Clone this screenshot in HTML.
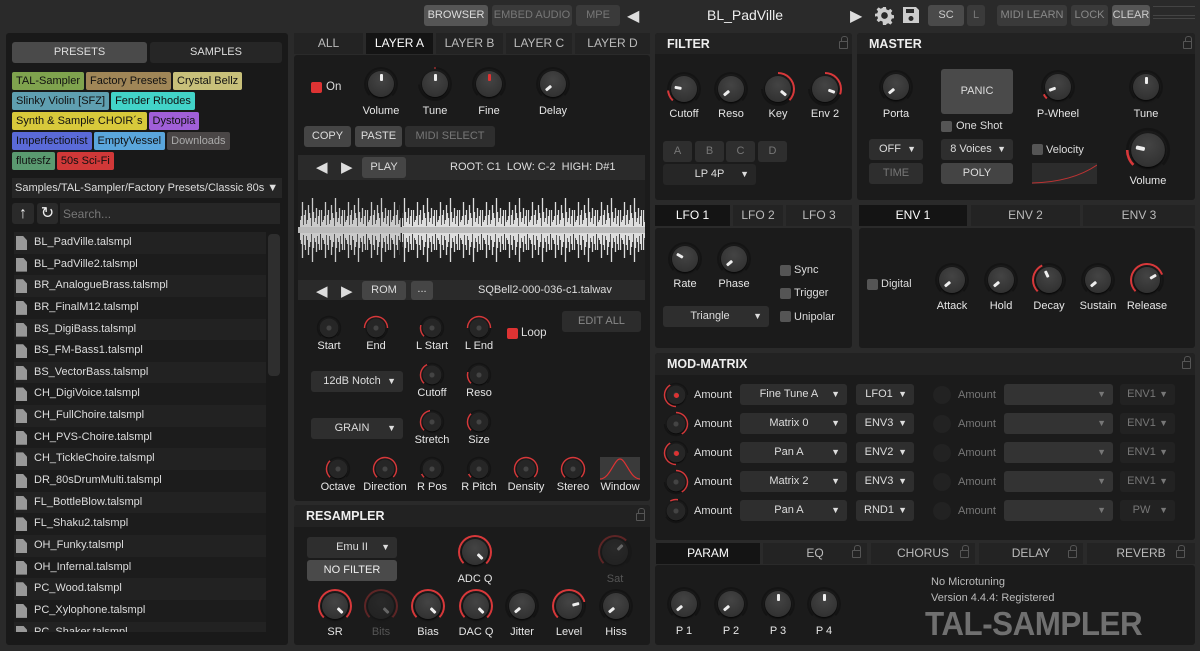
<!DOCTYPE html>
<html><head><meta charset="utf-8"><style>
*{box-sizing:border-box;margin:0;padding:0}
body{width:1200px;height:651px;overflow:hidden;background:#2a2a2a;font-family:"Liberation Sans",sans-serif;font-size:11px;color:#ddd;position:relative}
.a{position:absolute}
.p{position:absolute;background:#1b1b1b;border-radius:3px}
.h{position:absolute;background:#222;font-size:12.5px;font-weight:bold;color:#eee;padding:4px 0 0 12px;border-radius:3px 3px 0 0}
.b{position:absolute;background:#3a3a3a;border-radius:3px;text-align:center;font-size:11px;color:#ccc;line-height:21px}
.t{position:absolute;text-align:center;font-size:12px;color:#bbb;background:#232323;line-height:20px}
.l{position:absolute;font-size:11px;color:#e6e6e6;transform:translateX(-50%);white-space:nowrap}
.k{position:absolute;left:calc(var(--x) - 17px);top:calc(var(--y) - 17px);width:34px;height:34px;border-radius:50%;background:conic-gradient(from var(--s,225deg),#d8383a 0 var(--a,0deg),#141414 var(--a,0deg) 270deg,transparent 270deg)}
.k:before{content:"";position:absolute;inset:2px;border-radius:50%;background:#1b1b1b}
.k:after{content:"";position:absolute;inset:4px;border-radius:50%;background:radial-gradient(circle at 50% 35%,#444,#2c2c2c);box-shadow:0 1px 2px #000}
.k i{position:absolute;z-index:2;left:15.5px;top:7px;width:3px;height:7px;background:#eee;border-radius:1px;transform-origin:1.5px 10px;transform:rotate(var(--r,0deg))}
.kb{transform:scale(1.3)}
.ks{transform:scale(.72)}
.ks:after{background:radial-gradient(circle,#444 0 3px,#262626 4px)}
.dim{opacity:.35}
.dd{position:absolute;background:#2e2e2e;border-radius:3px;text-align:center;line-height:21px;font-size:11px;color:#ddd}
.dd:after{content:"▼";position:absolute;right:7px;font-size:9px}
.tag{display:inline-block;padding:0 4px;line-height:18px;margin:0 2px 2px 0;border-radius:2px;color:#111;font-size:11px}
.row{height:21.65px;line-height:21.65px;padding-left:20px;position:relative;font-size:11px;color:#ddd}
.row:before{content:"";position:absolute;left:2px;top:4px;width:11px;height:14px;background:#999;clip-path:polygon(0 0,65% 0,100% 30%,100% 100%,0 100%)}
.row:nth-child(odd){background:#222}.row:nth-child(even){background:#1c1c1c}
.ck{position:absolute;width:11px;height:11px;background:#555;border-radius:2px}
.lk{position:absolute;width:9px;height:8px;border:1.5px solid #555;border-radius:1px}
.lk:before{content:"";position:absolute;left:0.5px;top:-6px;width:5px;height:5px;border:1.5px solid #555;border-bottom:none;border-radius:3px 3px 0 0}
</style></head><body>
<!-- top bar -->
<div class="b" style="left:424px;top:5px;width:64px;height:21px;background:#555;color:#ddd">BROWSER</div>
<div class="b" style="left:492px;top:5px;width:80px;height:21px;color:#777">EMBED AUDIO</div>
<div class="b" style="left:576px;top:5px;width:44px;height:21px;color:#777">MPE</div>
<div class="a" style="left:627px;top:6px;font-size:16px;color:#ddd">◀</div>
<div class="a" style="left:690px;top:7px;width:110px;text-align:center;font-size:14px;color:#eee">BL_PadVille</div>
<div class="a" style="left:850px;top:6px;font-size:16px;color:#ddd">▶</div>
<svg class="a" style="left:875px;top:6px" width="19" height="19" viewBox="0 0 20 20"><path fill="#ccc" d="M8.5 1h3l.5 2.6 2 .9 2.2-1.5 2.1 2.1-1.5 2.2.9 2 2.6.5v3l-2.6.5-.9 2 1.5 2.2-2.1 2.1-2.2-1.5-2 .9-.5 2.6h-3L8 16.4l-2-.9-2.2 1.5-2.1-2.1 1.5-2.2-.9-2L-.3 11.2v-3L2.3 7.7l.9-2L1.7 3.5l2.1-2.1L6 2.9l2-.9zM10 6.5a3.5 3.5 0 100 7 3.5 3.5 0 000-7z"/></svg>
<svg class="a" style="left:902px;top:6px" width="18" height="18" viewBox="0 0 18 18"><path fill="#ccc" d="M1 1h13l3 3v13H1zM4 3v4h8V3zM9 10a2.5 2.5 0 100 5 2.5 2.5 0 000-5z"/></svg>
<div class="b" style="left:928px;top:5px;width:36px;height:21px;background:#4a4a4a">SC</div>
<div class="b" style="left:967px;top:5px;width:18px;height:21px;color:#777">L</div>
<div class="b" style="left:997px;top:5px;width:70px;height:21px;color:#888">MIDI LEARN</div>
<div class="b" style="left:1071px;top:5px;width:37px;height:21px;color:#888">LOCK</div>
<div class="b" style="left:1112px;top:5px;width:38px;height:21px;background:#555">CLEAR</div>
<div class="a" style="left:1153px;top:6px;width:42px;height:10px;border-top:1px solid #444;border-bottom:1px solid #444"></div>
<div class="a" style="left:1153px;top:18px;width:42px;height:1px;background:#444"></div>

<!-- browser -->
<div class="p" style="left:6px;top:33px;width:282px;height:612px;background:#191919"></div>
<div class="b" style="left:12px;top:42px;width:135px;height:21px;background:#4a4a4a;color:#ddd">PRESETS</div>
<div class="b" style="left:150px;top:42px;width:132px;height:21px;background:#262626;color:#ddd">SAMPLES</div>
<div class="a" style="left:12px;top:72px;width:272px;line-height:0">
<span class="tag" style="background:#7fa34e">TAL-Sampler</span><span class="tag" style="background:#a08657">Factory Presets</span><span class="tag" style="background:#c8c07a">Crystal Bellz</span><br>
<span class="tag" style="background:#5f9fb0">Slinky Violin [SFZ]</span><span class="tag" style="background:#42d3c8">Fender Rhodes</span><br>
<span class="tag" style="background:#d8c93b">Synth &amp; Sample CHOIR´s</span><span class="tag" style="background:#a05fd8">Dystopia</span><br>
<span class="tag" style="background:#5a6ad8">Imperfectionist</span><span class="tag" style="background:#5aa6dc">EmptyVessel</span><span class="tag" style="background:#4a4646;color:#aaa">Downloads</span><br>
<span class="tag" style="background:#5a9a70">flutesfz</span><span class="tag" style="background:#d03838">50s Sci-Fi</span></div>
<div class="a" style="left:12px;top:178px;width:270px;height:20px;background:#262626;line-height:20px;padding-left:3px;font-size:11px;white-space:nowrap;overflow:hidden">Samples/TAL-Sampler/Factory Presets/Classic 80s ▼</div>
<div class="b" style="left:12px;top:203px;width:22px;height:21px;background:#2a2a2a;font-size:16px;color:#eee;line-height:21px">↑</div>
<div class="b" style="left:37px;top:203px;width:21px;height:21px;background:#2a2a2a;font-size:16px;color:#eee;line-height:21px">↻</div>
<div class="a" style="left:60px;top:203px;width:220px;height:21px;background:#262626;color:#777;padding:4px 3px;font-size:12px">Search...</div>
<div class="a" style="left:14px;top:232px;width:252px;height:400px;overflow:hidden">
<div class="row">BL_PadVille.talsmpl</div><div class="row">BL_PadVille2.talsmpl</div><div class="row">BR_AnalogueBrass.talsmpl</div><div class="row">BR_FinalM12.talsmpl</div><div class="row">BS_DigiBass.talsmpl</div><div class="row">BS_FM-Bass1.talsmpl</div><div class="row">BS_VectorBass.talsmpl</div><div class="row">CH_DigiVoice.talsmpl</div><div class="row">CH_FullChoire.talsmpl</div><div class="row">CH_PVS-Choire.talsmpl</div><div class="row">CH_TickleChoire.talsmpl</div><div class="row">DR_80sDrumMulti.talsmpl</div><div class="row">FL_BottleBlow.talsmpl</div><div class="row">FL_Shaku2.talsmpl</div><div class="row">OH_Funky.talsmpl</div><div class="row">OH_Infernal.talsmpl</div><div class="row">PC_Wood.talsmpl</div><div class="row">PC_Xylophone.talsmpl</div><div class="row">PC_Shaker.talsmpl</div></div>
<div class="a" style="left:268px;top:234px;width:12px;height:142px;background:#2e2e2e;border-radius:4px"></div>

<!-- layer -->
<div class="t" style="left:294px;top:33px;width:69px;height:21px">ALL</div>
<div class="t" style="left:366px;top:33px;width:67px;height:21px;background:#141414;color:#fff">LAYER A</div>
<div class="t" style="left:436px;top:33px;width:67px;height:21px">LAYER B</div>
<div class="t" style="left:506px;top:33px;width:66px;height:21px">LAYER C</div>
<div class="t" style="left:575px;top:33px;width:75px;height:21px">LAYER D</div>
<div class="p" style="left:294px;top:55px;width:356px;height:446px"></div>
<div class="a" style="left:311px;top:82px;width:11px;height:11px;background:#d33;border-radius:2px"></div>
<div class="a" style="left:326px;top:81px;font-size:11.5px">On</div>
<div class="k" style="--x:381px;--y:84px"><i></i></div>
<div class="k" style="--x:435px;--y:84px;--s:358deg;--a:4deg"><i></i></div>
<div class="k" style="--x:489px;--y:84px"><i style="background:#d33"></i></div>
<div class="k" style="--x:553px;--y:84px;--r:-130deg"><i></i></div>
<div class="l" style="left:381px;top:105px">Volume</div><div class="l" style="left:435px;top:105px">Tune</div><div class="l" style="left:489px;top:105px">Fine</div><div class="l" style="left:553px;top:105px">Delay</div>
<div class="b" style="left:304px;top:126px;width:47px;height:21px;background:#454545;color:#ddd">COPY</div>
<div class="b" style="left:355px;top:126px;width:47px;height:21px;background:#454545;color:#ddd">PASTE</div>
<div class="b" style="left:405px;top:126px;width:90px;height:21px;background:#2e2e2e;color:#777">MIDI SELECT</div>
<div class="a" style="left:298px;top:155px;width:347px;height:25px;background:#2a2a2a"></div>
<div class="a" style="left:316px;top:158px;font-size:15px">◀</div><div class="a" style="left:341px;top:158px;font-size:15px">▶</div>
<div class="b" style="left:362px;top:157px;width:44px;height:21px;background:#454545;color:#ddd">PLAY</div>
<div class="a" style="left:450px;top:161px;font-size:11px">ROOT: C1&nbsp;&nbsp;LOW: C-2&nbsp;&nbsp;HIGH: D#1</div>
<svg class="a" style="left:298px;top:180px" width="347" height="100">
<defs><pattern id="w" width="23" height="100" patternUnits="userSpaceOnUse"><path stroke-width="1.3" d="M0.5 30V70M2.5 40V60M4.5 22V78M6.5 35V65M8.5 44V56M10.5 25V75M12.5 38V62M14.5 18V82M16.5 42V58M18.5 28V72M20.5 36V64M22.5 46V54M1.5 42V58M3.5 36V64M5.5 45V55M7.5 30V70M9.5 40V60M11.5 33V67M13.5 46V54M15.5 32V68M17.5 38V62M19.5 44V56M21.5 30V70" stroke="currentColor"/></pattern></defs>
<rect x="0" y="0" width="347" height="100" fill="#1f1f1f"/>
<g style="color:#8a8a8a"><rect x="2" y="14" width="100" height="72" fill="url(#w)" opacity=".9"/></g>
<rect x="102" y="38" width="1" height="24" fill="#888"/>
<g style="color:#dcdcdc"><rect x="104" y="6" width="243" height="88" fill="url(#w)"/></g>
<rect x="0" y="47" width="347" height="6" fill="#bbb"/>
</svg>
<div class="a" style="left:298px;top:280px;width:347px;height:20px;background:#2a2a2a"></div>
<div class="a" style="left:316px;top:282px;font-size:15px">◀</div><div class="a" style="left:341px;top:282px;font-size:15px">▶</div>
<div class="b" style="left:362px;top:281px;width:44px;height:19px;line-height:19px;background:#454545;color:#ddd">ROM</div>
<div class="b" style="left:411px;top:281px;width:22px;height:19px;line-height:16px;background:#454545;color:#ddd">...</div>
<div class="a" style="left:478px;top:284px;font-size:11px">SQBell2-000-036-c1.talwav</div>
<div class="b" style="left:562px;top:311px;width:79px;height:21px;background:#2c2c2c;color:#888">EDIT ALL</div>
<div class="a" style="left:507px;top:328px;width:11px;height:11px;background:#d33;border-radius:2px"></div>
<div class="a" style="left:521px;top:327px;font-size:11.5px">Loop</div>
<div class="k ks" style="--x:329px;--y:328px"></div>
<div class="k ks" style="--x:376px;--y:328px;--s:270deg;--a:180deg"></div>
<div class="k ks" style="--x:432px;--y:328px;--s:225deg;--a:60deg"></div>
<div class="k ks" style="--x:479px;--y:328px;--s:270deg;--a:180deg"></div>
<div class="l" style="left:329px;top:340px">Start</div><div class="l" style="left:376px;top:340px">End</div><div class="l" style="left:432px;top:340px">L Start</div><div class="l" style="left:479px;top:340px">L End</div>
<div class="dd" style="left:311px;top:371px;width:92px;height:21px;padding-right:10px">12dB Notch</div>
<div class="dd" style="left:311px;top:418px;width:92px;height:21px;padding-right:10px">GRAIN</div>
<div class="k ks" style="--x:432px;--y:375px;--a:110deg"></div>
<div class="k ks" style="--x:479px;--y:375px;--a:60deg"></div>
<div class="k ks" style="--x:432px;--y:422px;--a:125deg"></div>
<div class="k ks" style="--x:479px;--y:422px;--a:90deg"></div>
<div class="l" style="left:432px;top:387px">Cutoff</div><div class="l" style="left:479px;top:387px">Reso</div>
<div class="l" style="left:432px;top:434px">Stretch</div><div class="l" style="left:479px;top:434px">Size</div>
<div class="k ks" style="--x:338px;--y:469px;--a:90deg"></div>
<div class="k ks" style="--x:385px;--y:469px;--a:270deg"></div>
<div class="k ks" style="--x:432px;--y:469px;--a:20deg"></div>
<div class="k ks" style="--x:479px;--y:469px;--a:20deg"></div>
<div class="k ks" style="--x:526px;--y:469px;--a:270deg"></div>
<div class="k ks" style="--x:573px;--y:469px;--a:270deg"></div>
<svg class="a" style="left:600px;top:457px" width="40" height="23"><rect width="40" height="23" fill="#3a3a3a"/><path d="M0 22C10 22 14 2 20 2S30 22 40 22" fill="none" stroke="#d33" stroke-width="1.2"/></svg>
<div class="l" style="left:338px;top:481px">Octave</div><div class="l" style="left:385px;top:481px">Direction</div><div class="l" style="left:432px;top:481px">R Pos</div><div class="l" style="left:479px;top:481px">R Pitch</div><div class="l" style="left:526px;top:481px">Density</div><div class="l" style="left:573px;top:481px">Stereo</div><div class="l" style="left:620px;top:481px">Window</div>

<!-- resampler -->
<div class="p" style="left:294px;top:505px;width:356px;height:140px"></div>
<div class="h" style="left:294px;top:505px;width:356px;height:22px">RESAMPLER</div>
<div class="lk" style="left:636px;top:513px"></div>
<div class="dd" style="left:307px;top:537px;width:90px;height:21px">Emu II</div>
<div class="b" style="left:307px;top:560px;width:90px;height:21px;background:#4a4a4a;color:#eee">NO FILTER</div>
<div class="k" style="--x:475px;--y:552px;--a:270deg;--r:135deg"><i></i></div>
<div class="k dim" style="--x:615px;--y:552px;--a:180deg;--r:45deg"><i></i></div>
<div class="l" style="left:475px;top:573px">ADC Q</div><div class="l" style="left:615px;top:573px;color:#555">Sat</div>
<div class="k" style="--x:335px;--y:606px;--a:270deg;--r:135deg"><i></i></div>
<div class="k dim" style="--x:381px;--y:606px;--a:270deg;--r:135deg"><i></i></div>
<div class="k" style="--x:428px;--y:606px;--a:270deg;--r:135deg"><i></i></div>
<div class="k" style="--x:476px;--y:606px;--a:270deg;--r:135deg"><i></i></div>
<div class="k" style="--x:522px;--y:606px;--r:-130deg"><i></i></div>
<div class="k" style="--x:569px;--y:606px;--a:210deg;--r:75deg"><i></i></div>
<div class="k" style="--x:616px;--y:606px;--r:-130deg"><i></i></div>
<div class="l" style="left:335px;top:626px">SR</div><div class="l" style="left:381px;top:626px;color:#555">Bits</div><div class="l" style="left:428px;top:626px">Bias</div><div class="l" style="left:476px;top:626px">DAC Q</div><div class="l" style="left:522px;top:626px">Jitter</div><div class="l" style="left:569px;top:626px">Level</div><div class="l" style="left:616px;top:626px">Hiss</div>

<!-- filter -->
<div class="p" style="left:655px;top:33px;width:197px;height:167px"></div>
<div class="h" style="left:655px;top:33px;width:197px;height:21px">FILTER</div>
<div class="lk" style="left:839px;top:41px"></div>
<div class="k" style="--x:684px;--y:89px;--a:40deg;--r:-80deg"><i></i></div>
<div class="k" style="--x:731px;--y:89px;--r:-130deg"><i></i></div>
<div class="k" style="--x:778px;--y:89px;--s:0deg;--a:135deg;--r:130deg"><i></i></div>
<div class="k" style="--x:825px;--y:89px;--s:0deg;--a:110deg;--r:110deg"><i></i></div>
<div class="l" style="left:684px;top:108px">Cutoff</div><div class="l" style="left:731px;top:108px">Reso</div><div class="l" style="left:778px;top:108px">Key</div><div class="l" style="left:825px;top:108px">Env 2</div>
<div class="b" style="left:663px;top:141px;width:29px;height:21px;background:#2e2e2e;color:#777">A</div>
<div class="b" style="left:695px;top:141px;width:29px;height:21px;background:#2e2e2e;color:#777">B</div>
<div class="b" style="left:726px;top:141px;width:29px;height:21px;background:#2e2e2e;color:#777">C</div>
<div class="b" style="left:758px;top:141px;width:29px;height:21px;background:#2e2e2e;color:#777">D</div>
<div class="dd" style="left:663px;top:164px;width:93px;height:21px;background:#262626">LP 4P</div>

<!-- master -->
<div class="p" style="left:857px;top:33px;width:338px;height:167px"></div>
<div class="h" style="left:857px;top:33px;width:338px;height:21px">MASTER</div>
<div class="lk" style="left:1183px;top:41px"></div>
<div class="k" style="--x:896px;--y:87px;--r:-130deg"><i></i></div>
<div class="k" style="--x:1058px;--y:87px;--a:18deg;--r:-110deg"><i></i></div>
<div class="k" style="--x:1146px;--y:87px"><i></i></div>
<div class="k kb" style="--x:1148px;--y:150px;--a:45deg;--r:-78deg"><i></i></div>
<div class="l" style="left:896px;top:108px">Porta</div><div class="l" style="left:1058px;top:108px">P-Wheel</div><div class="l" style="left:1146px;top:108px">Tune</div><div class="l" style="left:1148px;top:175px">Volume</div>
<div class="b" style="left:941px;top:69px;width:72px;height:45px;line-height:45px;background:#4a4a4a;color:#ddd">PANIC</div>
<div class="ck" style="left:941px;top:121px"></div><div class="a" style="left:956px;top:120px">One Shot</div>
<div class="dd" style="left:869px;top:139px;width:54px;height:21px;padding-right:12px">OFF</div>
<div class="b" style="left:869px;top:163px;width:54px;height:21px;background:#2e2e2e;color:#777">TIME</div>
<div class="dd" style="left:941px;top:139px;width:72px;height:21px;padding-right:12px">8 Voices</div>
<div class="b" style="left:941px;top:163px;width:72px;height:21px;background:#444;color:#ddd">POLY</div>
<div class="ck" style="left:1032px;top:144px"></div><div class="a" style="left:1046px;top:144px">Velocity</div>
<svg class="a" style="left:1032px;top:163px" width="65" height="21"><rect width="65" height="21" fill="#2c2c2c"/><path d="M0 20Q40 19 65 2" fill="none" stroke="#b33" stroke-width="1"/></svg>

<!-- lfo -->
<div class="t" style="left:655px;top:205px;width:75px;height:21px;background:#141414;color:#fff">LFO 1</div>
<div class="t" style="left:733px;top:205px;width:50px;height:21px">LFO 2</div>
<div class="t" style="left:786px;top:205px;width:66px;height:21px">LFO 3</div>
<div class="p" style="left:655px;top:228px;width:197px;height:120px"></div>
<div class="k" style="--x:685px;--y:259px;--r:-60deg"><i></i></div>
<div class="k" style="--x:734px;--y:259px;--r:-130deg"><i></i></div>
<div class="l" style="left:685px;top:278px">Rate</div><div class="l" style="left:734px;top:278px">Phase</div>
<div class="ck" style="left:780px;top:265px"></div><div class="a" style="left:794px;top:264px">Sync</div>
<div class="ck" style="left:780px;top:288px"></div><div class="a" style="left:794px;top:287px">Trigger</div>
<div class="ck" style="left:780px;top:311px"></div><div class="a" style="left:794px;top:311px">Unipolar</div>
<div class="dd" style="left:663px;top:306px;width:106px;height:21px;padding-right:12px">Triangle</div>

<!-- env -->
<div class="t" style="left:859px;top:205px;width:108px;height:21px;background:#141414;color:#fff">ENV 1</div>
<div class="t" style="left:971px;top:205px;width:109px;height:21px">ENV 2</div>
<div class="t" style="left:1083px;top:205px;width:112px;height:21px">ENV 3</div>
<div class="p" style="left:859px;top:228px;width:336px;height:120px"></div>
<div class="ck" style="left:867px;top:279px"></div><div class="a" style="left:881px;top:278px">Digital</div>
<div class="k" style="--x:952px;--y:280px;--r:-130deg"><i></i></div>
<div class="k" style="--x:1001px;--y:280px;--r:-130deg"><i></i></div>
<div class="k" style="--x:1049px;--y:280px;--a:110deg;--r:-25deg"><i></i></div>
<div class="k" style="--x:1098px;--y:280px;--r:-130deg"><i></i></div>
<div class="k" style="--x:1147px;--y:280px;--a:205deg;--r:60deg"><i></i></div>
<div class="l" style="left:952px;top:300px">Attack</div><div class="l" style="left:1001px;top:300px">Hold</div><div class="l" style="left:1049px;top:300px">Decay</div><div class="l" style="left:1098px;top:300px">Sustain</div><div class="l" style="left:1147px;top:300px">Release</div>

<!-- mod matrix -->
<div class="p" style="left:655px;top:353px;width:540px;height:187px"></div>
<div class="h" style="left:655px;top:353px;width:540px;height:22px">MOD-MATRIX</div>
<div class="lk" style="left:1182px;top:361px"></div>
<div class="k ks" style="--x:676px;--y:395px;--s:180deg;--a:150deg"></div>
<div class="k ks" style="--x:676px;--y:424px;--s:0deg;--a:150deg"></div>
<div class="k ks" style="--x:676px;--y:453px;--s:180deg;--a:150deg"></div>
<div class="k ks" style="--x:676px;--y:482px;--s:0deg;--a:150deg"></div>
<div class="k ks" style="--x:676px;--y:511px;--s:330deg;--a:40deg"></div>
<div class="a" style="left:674px;top:393px;width:5px;height:5px;border-radius:50%;background:#d33"></div>
<div class="a" style="left:674px;top:451px;width:5px;height:5px;border-radius:50%;background:#d33"></div>
<div class="a" style="left:694px;top:381px;line-height:29px;font-size:11px">Amount<br>Amount<br>Amount<br>Amount<br>Amount</div>
<div class="dd" style="left:740px;top:384px;width:107px;height:21px">Fine Tune A&nbsp;&nbsp;&nbsp;</div>
<div class="dd" style="left:740px;top:413px;width:107px;height:21px">Matrix 0&nbsp;&nbsp;&nbsp;</div>
<div class="dd" style="left:740px;top:442px;width:107px;height:21px">Pan A&nbsp;&nbsp;&nbsp;</div>
<div class="dd" style="left:740px;top:471px;width:107px;height:21px">Matrix 2&nbsp;&nbsp;&nbsp;</div>
<div class="dd" style="left:740px;top:500px;width:107px;height:21px">Pan A&nbsp;&nbsp;&nbsp;</div>
<div class="dd" style="left:856px;top:384px;width:58px;height:21px;padding-right:12px">LFO1</div>
<div class="dd" style="left:856px;top:413px;width:58px;height:21px;padding-right:12px">ENV3</div>
<div class="dd" style="left:856px;top:442px;width:58px;height:21px;padding-right:12px">ENV2</div>
<div class="dd" style="left:856px;top:471px;width:58px;height:21px;padding-right:12px">ENV3</div>
<div class="dd" style="left:856px;top:500px;width:58px;height:21px;padding-right:12px">RND1</div>
<div class="a" style="left:958px;top:381px;line-height:29px;font-size:11px;color:#777">Amount<br>Amount<br>Amount<br>Amount<br>Amount</div>
<div class="a" style="left:933px;top:386px;width:18px;height:18px;border-radius:50%;background:#222"></div>
<div class="a" style="left:933px;top:415px;width:18px;height:18px;border-radius:50%;background:#222"></div>
<div class="a" style="left:933px;top:444px;width:18px;height:18px;border-radius:50%;background:#222"></div>
<div class="a" style="left:933px;top:473px;width:18px;height:18px;border-radius:50%;background:#222"></div>
<div class="a" style="left:933px;top:502px;width:18px;height:18px;border-radius:50%;background:#222"></div>
<div class="dd" style="left:1004px;top:384px;width:109px;height:21px;background:#333;color:#777"></div>
<div class="dd" style="left:1004px;top:413px;width:109px;height:21px;background:#333;color:#777"></div>
<div class="dd" style="left:1004px;top:442px;width:109px;height:21px;background:#333;color:#777"></div>
<div class="dd" style="left:1004px;top:471px;width:109px;height:21px;background:#333;color:#777"></div>
<div class="dd" style="left:1004px;top:500px;width:109px;height:21px;background:#333;color:#777"></div>
<div class="dd" style="left:1120px;top:384px;width:55px;height:21px;background:#222;color:#777;padding-right:12px">ENV1</div>
<div class="dd" style="left:1120px;top:413px;width:55px;height:21px;background:#222;color:#777;padding-right:12px">ENV1</div>
<div class="dd" style="left:1120px;top:442px;width:55px;height:21px;background:#222;color:#777;padding-right:12px">ENV1</div>
<div class="dd" style="left:1120px;top:471px;width:55px;height:21px;background:#222;color:#777;padding-right:12px">ENV1</div>
<div class="dd" style="left:1120px;top:500px;width:55px;height:21px;background:#222;color:#777;padding-right:12px">PW</div>

<!-- bottom -->
<div class="t" style="left:656px;top:543px;width:104px;height:21px;background:#141414;color:#fff">PARAM</div>
<div class="t" style="left:763px;top:543px;width:104px;height:21px">EQ</div>
<div class="t" style="left:871px;top:543px;width:104px;height:21px">CHORUS</div>
<div class="t" style="left:979px;top:543px;width:104px;height:21px">DELAY</div>
<div class="t" style="left:1087px;top:543px;width:108px;height:21px">REVERB</div>
<div class="lk" style="left:852px;top:550px"></div><div class="lk" style="left:960px;top:550px"></div><div class="lk" style="left:1068px;top:550px"></div><div class="lk" style="left:1176px;top:550px"></div>
<div class="p" style="left:655px;top:565px;width:540px;height:80px"></div>
<div class="k" style="--x:684px;--y:604px;--r:-130deg"><i></i></div>
<div class="k" style="--x:731px;--y:604px;--r:-130deg"><i></i></div>
<div class="k" style="--x:778px;--y:604px"><i></i></div>
<div class="k" style="--x:824px;--y:604px"><i></i></div>
<div class="l" style="left:684px;top:625px">P 1</div><div class="l" style="left:731px;top:625px">P 2</div><div class="l" style="left:778px;top:625px">P 3</div><div class="l" style="left:824px;top:625px">P 4</div>
<div class="a" style="left:931px;top:576px;color:#bbb">No Microtuning</div>
<div class="a" style="left:931px;top:592px;color:#bbb">Version 4.4.4: Registered</div>
<div class="a" style="left:925px;top:605px;font-size:33px;font-weight:bold;color:#707070;letter-spacing:-0.5px;transform:scaleX(.95);transform-origin:left">TAL-SAMPLER</div>
</body></html>
